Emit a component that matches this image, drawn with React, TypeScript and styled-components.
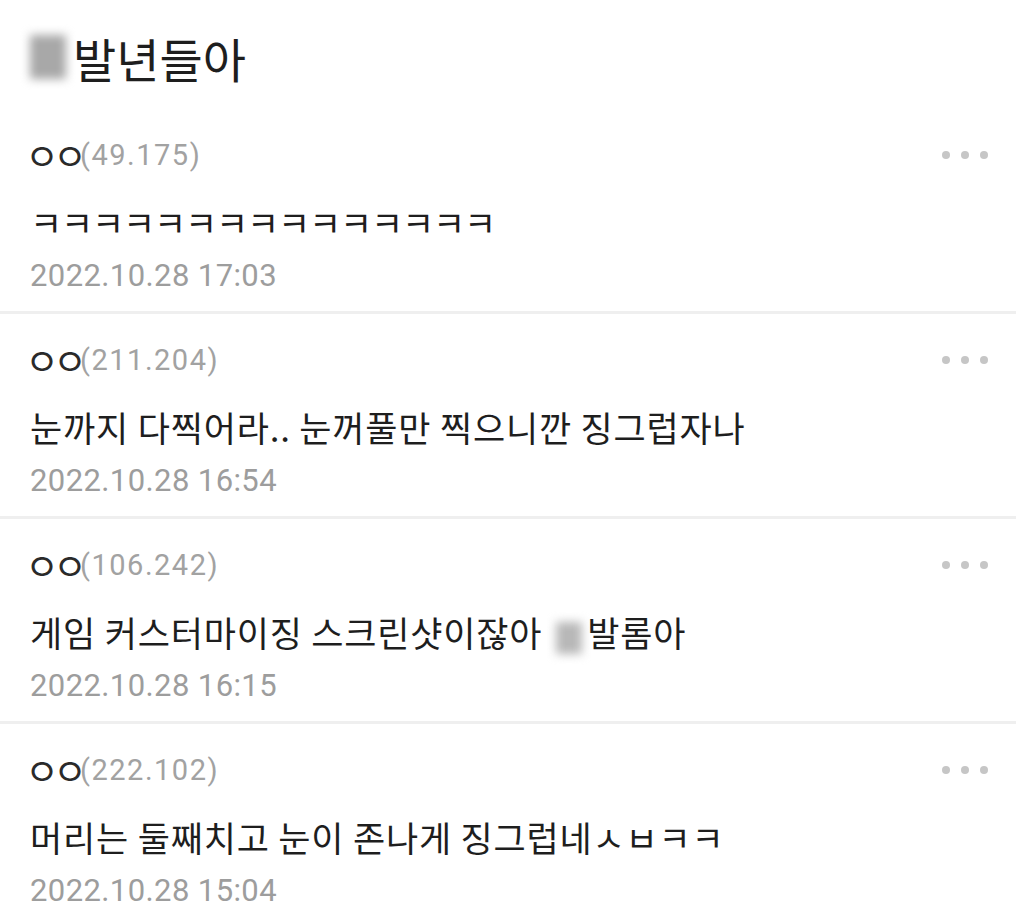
import React from "react";
import styled, { createGlobalStyle } from "styled-components";

const Global = createGlobalStyle`
  html, body { margin: 0; padding: 0; background: #ffffff; }
  body { font-family: "Noto Sans CJK KR", "Noto Sans", sans-serif; }
`;

const Page = styled.div`
  width: 1016px;
  min-height: 923px;
  background: #ffffff;
  padding-top: 27px;
  box-sizing: border-box;
  overflow: hidden;
`;

const Title = styled.h1`
  margin: 0 0 22px;
  padding: 0 30px;
  display: flex;
  align-items: center;
  height: 60px;
  font-family: "Noto Sans CJK KR", sans-serif;
  font-weight: 400;
  font-size: 47px;
  color: #1e1e1e;
  letter-spacing: 0;
`;

const Blur = styled.span<{ $w: number; $h: number; $tone: string; $ml?: number; $mr?: number }>`
  display: inline-block;
  width: ${(p) => p.$w}px;
  height: ${(p) => p.$h}px;
  margin-left: ${(p) => p.$ml ?? 0}px;
  margin-right: ${(p) => p.$mr ?? 0}px;
  background: ${(p) => p.$tone};
  filter: blur(5px);
  vertical-align: middle;
`;

const Row = styled.div`
  padding: 26px 28px 15px 30px;
  border-bottom: 3px solid #efefef;
  display: flex;
  flex-direction: column;
`;

const Head = styled.div`
  display: flex;
  align-items: center;
  justify-content: space-between;
  height: 40px;
`;

const Name = styled.div`
  display: flex;
  align-items: center;
  height: 40px;
`;

const Nick = styled.span`
  font-family: "Noto Sans CJK KR", sans-serif;
  font-size: 37px;
  line-height: 40px;
  letter-spacing: -6px;
  margin-left: -5px;
  margin-right: -1px;
  color: #2a2a2a;
`;

const Ip = styled.span`
  font-family: Roboto, "Liberation Sans", sans-serif;
  font-size: 29px;
  letter-spacing: 1.5px;
  color: #a2a2a2;
`;

const More = styled.div`
  display: flex;
  gap: 11px;
`;

const Dot = styled.span`
  width: 8px;
  height: 8px;
  border-radius: 50%;
  background: #c6c6c6;
`;

const Body = styled.div<{ $spacing?: number }>`
  margin-top: 25px;
  height: 44px;
  line-height: 44px;
  font-family: "Noto Sans CJK KR", sans-serif;
  font-size: 35px;
  letter-spacing: ${(p) => p.$spacing ?? 0.8}px;
  color: #1e1e1e;
  white-space: nowrap;
`;

const Date = styled.div`
  margin-top: 12px;
  height: 40px;
  line-height: 40px;
  font-family: Roboto, "Liberation Sans", sans-serif;
  font-size: 31px;
  letter-spacing: 0.4px;
  color: #9d9d9d;
`;

type Comment = { ip: string; body: React.ReactNode; date: string; spacing?: number };

const comments: Comment[] = [
  { ip: "(49.175)", body: "ㅋㅋㅋㅋㅋㅋㅋㅋㅋㅋㅋㅋㅋㅋㅋ", date: "2022.10.28 17:03", spacing: -1.2 },
  { ip: "(211.204)", body: "눈까지 다찍어라.. 눈꺼풀만 찍으니깐 징그럽자나", date: "2022.10.28 16:54" },
  {
    ip: "(106.242)",
    body: (
      <>
        게임 커스터마이징 스크린샷이잖아
        <Blur $w={26} $h={32} $tone="#b8b8b8" $ml={14} $mr={5} />
        발롬아
      </>
    ),
    date: "2022.10.28 16:15",
  },
  { ip: "(222.102)", body: "머리는 둘째치고 눈이 존나게 징그럽네ㅅㅂㅋㅋ", date: "2022.10.28 15:04" },
];

export default function App() {
  return (
    <Page>
      <Global />
      <Title>
        <Blur $w={36} $h={44} $tone="#a8a8a8" $mr={7} />
        발년들아
      </Title>
      {comments.map((c, i) => (
        <Row key={i}>
          <Head>
            <Name>
              <Nick>ㅇㅇ</Nick>
              <Ip>{c.ip}</Ip>
            </Name>
            <More>
              <Dot />
              <Dot />
              <Dot />
            </More>
          </Head>
          <Body $spacing={c.spacing}>{c.body}</Body>
          <Date>{c.date}</Date>
        </Row>
      ))}
    </Page>
  );
}
